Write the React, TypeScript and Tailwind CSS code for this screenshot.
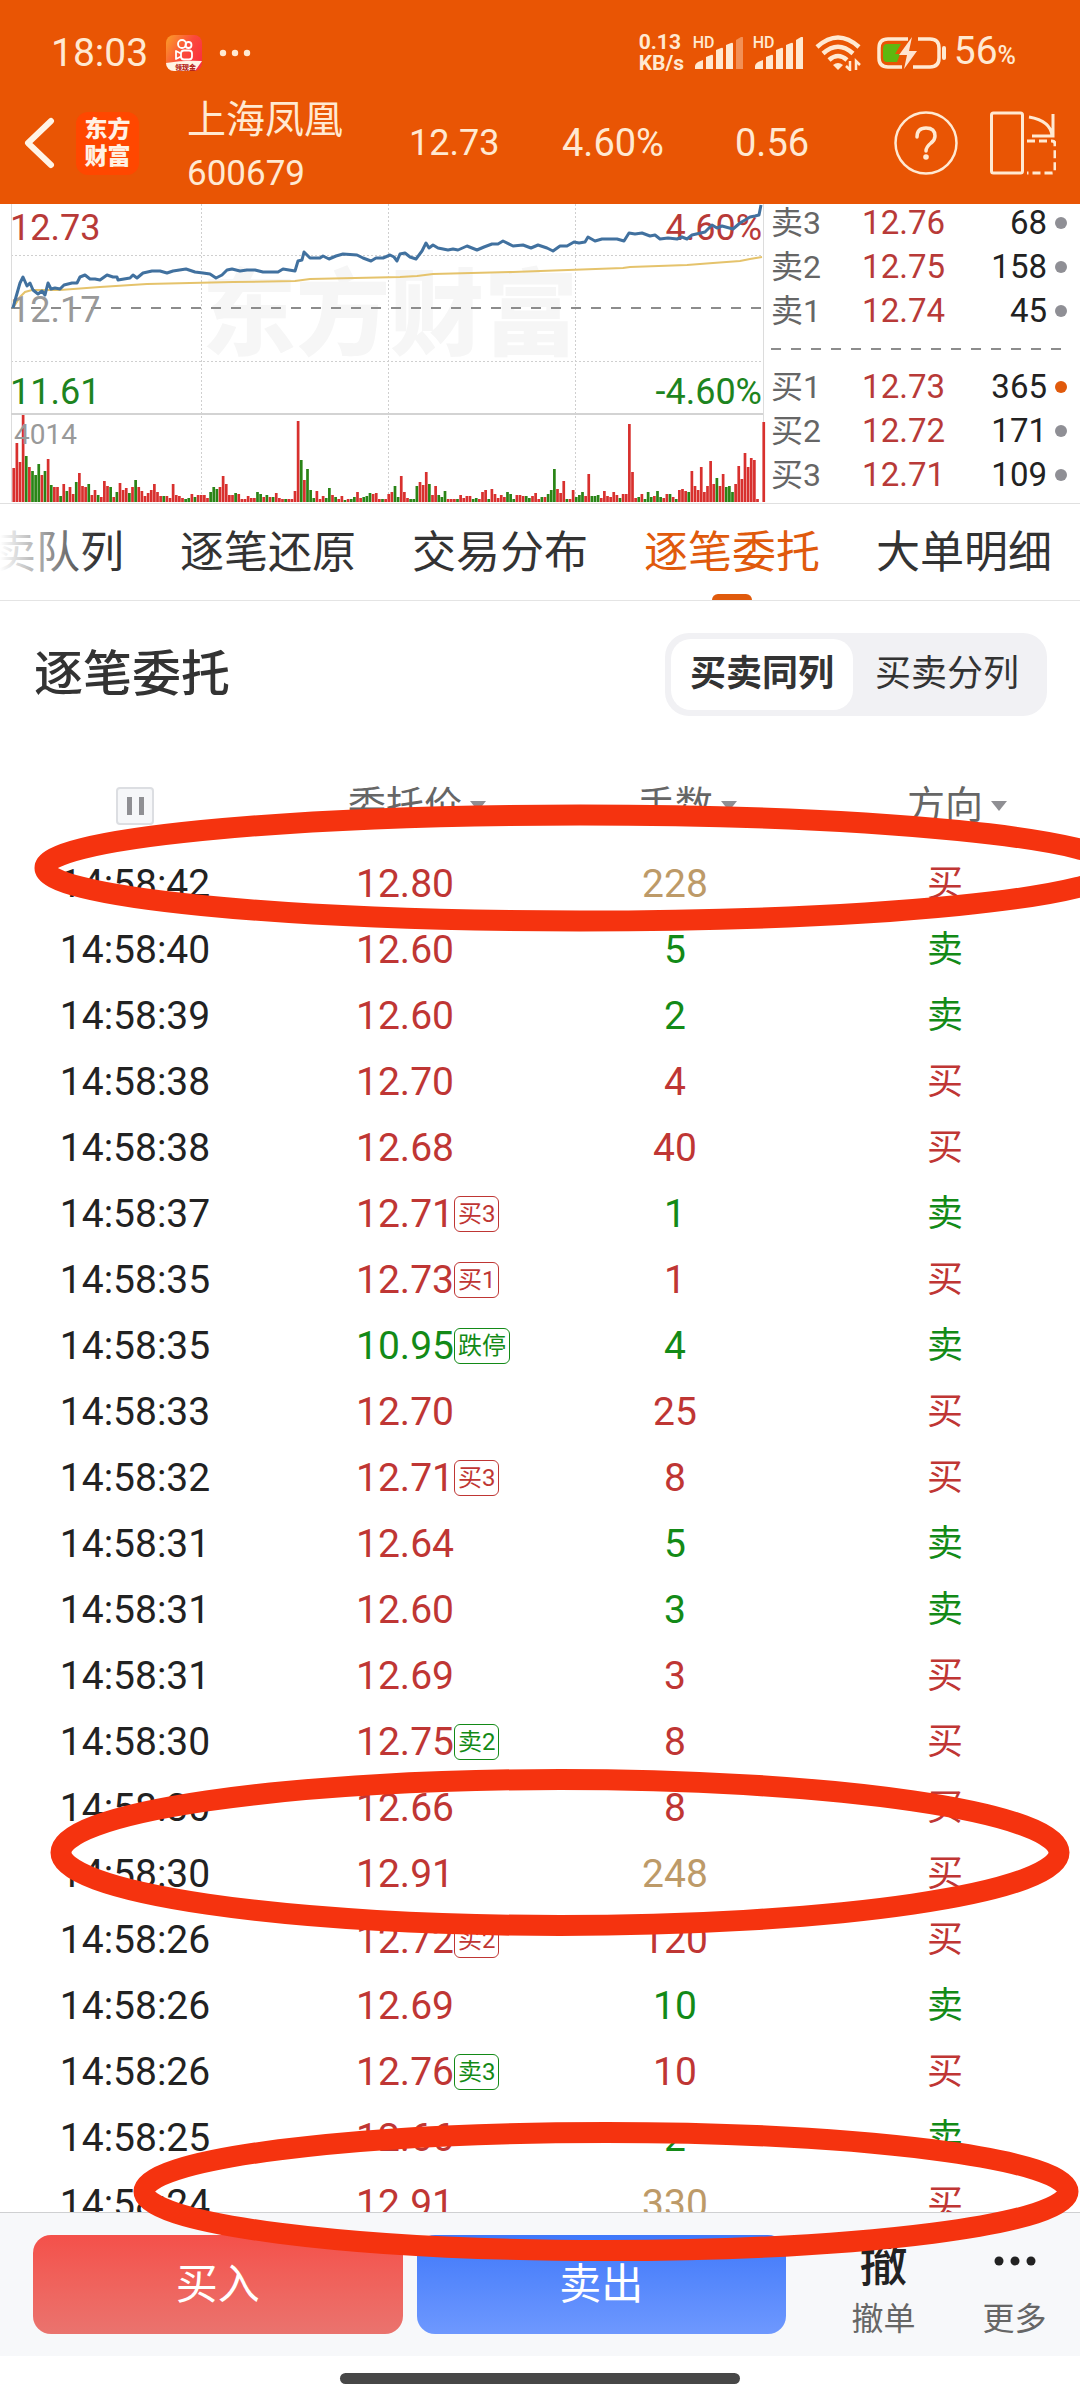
import React from 'react';

type Side = 'buy' | 'sell';

interface Order {
    time: string;
    price: string;
    volume: string;
    side: Side;
    tone?: Side;
    big?: boolean;
    tag?: string;
    tagTone?: Side;
}

const ORDERS: Order[] = [
    { time: '14:58:42', price: '12.80', volume: '228', side: 'buy', big: true },
    { time: '14:58:40', price: '12.60', volume: '5', side: 'sell' },
    { time: '14:58:39', price: '12.60', volume: '2', side: 'sell' },
    { time: '14:58:38', price: '12.70', volume: '4', side: 'buy' },
    { time: '14:58:38', price: '12.68', volume: '40', side: 'buy' },
    { time: '14:58:37', price: '12.71', volume: '1', side: 'sell', tag: '买3', tagTone: 'buy' },
    { time: '14:58:35', price: '12.73', volume: '1', side: 'buy', tag: '买1', tagTone: 'buy' },
    { time: '14:58:35', price: '10.95', volume: '4', side: 'sell', tone: 'sell', tag: '跌停', tagTone: 'sell' },
    { time: '14:58:33', price: '12.70', volume: '25', side: 'buy' },
    { time: '14:58:32', price: '12.71', volume: '8', side: 'buy', tag: '买3', tagTone: 'buy' },
    { time: '14:58:31', price: '12.64', volume: '5', side: 'sell' },
    { time: '14:58:31', price: '12.60', volume: '3', side: 'sell' },
    { time: '14:58:31', price: '12.69', volume: '3', side: 'buy' },
    { time: '14:58:30', price: '12.75', volume: '8', side: 'buy', tag: '卖2', tagTone: 'sell' },
    { time: '14:58:30', price: '12.66', volume: '8', side: 'buy' },
    { time: '14:58:30', price: '12.91', volume: '248', side: 'buy', big: true },
    { time: '14:58:26', price: '12.72', volume: '120', side: 'buy', tag: '买2', tagTone: 'buy' },
    { time: '14:58:26', price: '12.69', volume: '10', side: 'sell' },
    { time: '14:58:26', price: '12.76', volume: '10', side: 'buy', tag: '卖3', tagTone: 'sell' },
    { time: '14:58:25', price: '12.66', volume: '2', side: 'sell' },
    { time: '14:58:24', price: '12.91', volume: '330', side: 'buy', big: true },
];

const ASKS = [
    ['卖3', '12.76', '68'],
    ['卖2', '12.75', '158'],
    ['卖1', '12.74', '45'],
];

const BIDS = [
    ['买1', '12.73', '365'],
    ['买2', '12.72', '171'],
    ['买3', '12.71', '109'],
];

const TABS = ['买卖队列', '逐笔还原', '交易分布', '逐笔委托', '大单明细'];

const PRICE_LINE =
    '13,104 16,93 20,79 23,73 27,82 30,79 33,86 38,90 42,87 45,91 48,79 51,85 55,84 60,85 64,81 72,79 77,79 80,73 85,71 90,75 95,75 100,76 107,71 113,73 117,73 118,76 130,74 133,71 137,74 143,69 152,67 160,67 167,69 173,67 186,65 195,68 203,69 210,70 216,74 222,71 227,66 232,65 240,67 247,66 255,66 263,68 278,68 283,65 295,67 298,57 302,56 304,48 310,54 315,54 320,54 323,52 329,55 336,52 343,50 357,51 363,54 371,57 376,54 383,54 390,51 394,53 397,57 400,50 405,49 410,53 416,55 422,47 426,39 429,44 433,41 438,44 448,46 453,45 458,46 467,42 477,46 484,43 492,40 498,40 503,37 513,42 523,41 531,44 538,41 547,44 553,47 560,42 567,42 574,38 579,39 585,38 588,33 595,37 602,35 617,35 624,37 629,29 635,30 642,29 650,32 655,31 660,35 668,34 677,35 682,33 687,35 692,31 705,28 712,21 717,24 722,22 733,25 740,19 750,13 755,12 759,11 761,1';

const AVERAGE_LINE =
    '13,104 20,93 25,88 32,86 60,86 100,83 147,80 233,78 295,77 310,75 400,73 417,72 433,70 513,68 623,64 630,63 687,61 713,59 740,57 750,55 762,53';

// One entry per minute: r = up, g = down, followed by the bar height
const VOLUMES =
    'r34 r59 r40 r87 g46 r35 g31 g27 g38 r27 g31 r43 g17 r15 r15 g6 r18 g11 r15 r8 g20 r29 r16 r15 g18 r7 r12 g7 r5 r21 r16 g15 r5 g10 r19 r12 r14 g9 r15 g22 r15 r11 r6 r9 r12 r18 r10 r6 g6 r6 r4 r18 r7 r6 r4 g3 g4 r8 g5 r7 r7 r7 r4 g10 g15 g13 r15 r26 r18 r7 r7 g9 r8 r3 r3 r6 r4 r4 g10 g8 r5 g7 r5 g5 r9 r4 r3 g3 r3 r3 r11 r81 g42 r22 g33 g12 g4 r11 r3 r6 g4 g14 r7 g5 r3 r6 g2 r3 g3 g5 r10 r4 g5 g6 g9 r8 r9 r3 g3 r3 r8 r10 g16 g5 r26 r10 r4 g3 g3 g16 r20 r17 r30 g18 r7 r16 g7 g5 g11 r3 r3 r3 g3 r7 r4 r6 r6 g3 g4 r3 r10 r12 g3 r13 r8 r4 r7 r5 g10 g8 g3 r7 r7 r6 g6 g4 r6 r9 r3 g5 r5 g8 g12 g33 r13 r9 r21 g3 r3 r12 g5 g7 g10 r6 r28 g6 g6 g7 r4 r11 r6 r5 r10 r7 g4 r8 r8 r78 r30 r4 g5 r8 g3 g10 g5 r6 g11 g5 r4 r8 g8 r5 g3 r12 r13 r11 g10 r31 r16 r12 r35 r10 r16 r41 r18 g24 r16 r28 g15 g16 g10 r18 r36 r23 r49 r35 r44 r42 r3 r0 r80'.split(' ');

const textTone = (side: Side) => (side === 'buy' ? 'text-[#bf3634]' : 'text-[#138a17]');

const SignalBars: React.FC<{ weak?: boolean }> = ({ weak }) => (
    <span className="relative block">
        <span className="absolute -left-0.5 -top-1 text-[16px] leading-5 font-medium">HD</span>
        <svg className="h-8 w-12" viewBox="0 0 48 32" fill="currentColor">
            <path d="M0 32v-3q0-2 3-4l5-2v9z" />
            <path d="M11 20l5-2q2-1 2 1v13h-7z" />
            <path d="M21 13l5-2q2-1 2 1v20h-7z" />
            <path d="M31 8l5-2q2-1 2 1v25h-7z" />
            <path d="M41 3l5-3q2-1 2 1v31h-7z" opacity={weak ? 0.4 : 1} />
        </svg>
    </span>
);

const StatusBar: React.FC = () => (
    <div className="flex h-[82px] items-center pt-6 pr-16 pl-[51px]">
        <span className="text-[39px] leading-[48px]">18:03</span>
        <svg className="ml-[18px] size-9" viewBox="0 0 36 36">
            <defs>
                <linearGradient id="camera" x1="0" y1="0" x2="1" y2="0.6">
                    <stop offset="0" stopColor="#fba028" />
                    <stop offset="0.6" stopColor="#fb4a3c" />
                    <stop offset="1" stopColor="#fa3240" />
                </linearGradient>
                <clipPath id="camera-clip">
                    <rect width="36" height="36" rx="8" />
                </clipPath>
            </defs>
            <g clipPath="url(#camera-clip)">
                <rect width="36" height="36" fill="url(#camera)" />
                <path d="M0 28q18-3 36-2l-7 10H0z" fill="#fff3e4" />
                <g fill="none" stroke="#fff" strokeWidth="1.8">
                    <circle cx="16" cy="9" r="4" />
                    <circle cx="22.500" cy="10" r="3" />
                    <rect x="15" y="15.500" width="11" height="9" rx="3" />
                    <path d="M15 18.500l-5-2.500v8l5-2.500" strokeLinejoin="round" />
                </g>
                <text x="9" y="34.500" fontSize="7" fontWeight="900" fill="#b4261a">领现金</text>
            </g>
        </svg>
        <svg className="ml-[17px] h-2 w-8" viewBox="0 0 32 8" fill="currentColor">
            <circle cx="4" cy="4" r="3.200" />
            <circle cx="16" cy="4" r="3.200" />
            <circle cx="28" cy="4" r="3.200" />
        </svg>
        <div className="ml-auto flex w-[54px] flex-col text-[21px] leading-[21px] font-bold">
            <span>0.13</span>
            <span>KB/s</span>
        </div>
        <div className="ml-0.5 flex gap-3">
            <SignalBars weak />
            <SignalBars />
        </div>
        <svg className="ml-3 h-9 w-[46px]" viewBox="0 0 46 36" fill="none" stroke="currentColor" strokeWidth="4.500">
            <path d="M2 12Q23-7 44 12" />
            <path d="M8 18.500Q23 5 38 18.500" />
            <path d="M14 25Q23 17 32 25" />
            <path d="M18 30q5-4 10 0l-5 5z" fill="currentColor" stroke="none" />
            <path d="M35 26v9l-4-4M41 35v-9l4 4" strokeWidth="2.500" />
        </svg>
        <svg className="ml-4 h-8 w-[69px]" viewBox="0 0 69 32" fill="none">
            <path d="M31 2H11Q2 2 2 11v10q0 9 9 9h14M36 30h17q9 0 9-9V11q0-9-9-9H41" stroke="currentColor" strokeWidth="3.500" />
            <path d="M10 7h14l-6 10h5l-3 8H10Q6 25 6 20v-8q0-5 4-5z" fill="#5fb80f" />
            <path d="M35 0L22 18h8l-3 14 13-18h-8z" fill="#ffe3d0" />
            <path d="M67 11v10" stroke="currentColor" strokeWidth="4" strokeLinecap="round" />
        </svg>
        <span className="ml-2 text-[39px] leading-[48px]">
            56<span className="text-[25px] font-medium">%</span>
        </span>
    </div>
);

const Header: React.FC = () => (
    <header className="bg-[#e95504] text-[#ffe9d2]">
        <StatusBar />
        <div className="flex h-[122px] items-center pr-6 pl-6">
            <button aria-label="返回" className="h-[52px] w-8">
                <svg className="h-full w-full" viewBox="0 0 32 52" fill="none" stroke="#fff4e6" strokeWidth="6" strokeLinecap="round" strokeLinejoin="round">
                    <path d="M27 4L4 26l23 22" />
                </svg>
            </button>
            <div className="ml-5 flex size-[63px] items-center justify-center rounded-xl bg-[#ff4700] text-center text-[23px] leading-[27px] font-black text-[#fff1e4]">
                东方
                <br />
                财富
            </div>
            <div className="ml-12 w-[222px] pt-2 text-[35px] leading-[54px]">
                <h1 className="text-[39px]">上海凤凰</h1>
                <p>600679</p>
            </div>
            <span className="w-[153px] text-[36px]">12.73</span>
            <span className="w-[173px] text-[38px]">4.60%</span>
            <span className="flex-1 text-[38px]">0.56</span>
            <button aria-label="帮助" className="size-16">
                <svg className="h-full w-full" viewBox="0 0 64 64" fill="none" stroke="currentColor" strokeWidth="2.500">
                    <circle cx="32" cy="32" r="30.500" />
                    <path d="M23 26q0-9 9-9t9 8q0 4-4 7-5 4-5 8" strokeWidth="3.500" strokeLinecap="round" />
                    <circle cx="32" cy="46" r="2.800" fill="currentColor" stroke="none" />
                </svg>
            </button>
            <button aria-label="横屏" className="ml-8 h-16 w-[66px]">
                <svg className="h-full w-full" viewBox="0 0 66 64" fill="none" stroke="currentColor" strokeWidth="3">
                    <rect x="1.500" y="2" width="31" height="60" rx="2" />
                    <path d="M39 6q22 4 23 19M63 3v22H42" />
                    <path d="M37 30h25q3 0 3 3v26q0 3-3 3H37" strokeDasharray="8 4" />
                </svg>
            </button>
        </div>
    </header>
);

const Chart: React.FC = () => (
    <svg className="block w-full" viewBox="0 0 768 299" fill="none">
        <text x="390" y="144" textAnchor="middle" fontSize="94" fontWeight="900" fill="#f6f6f6">东方财富</text>
        <g stroke="#cfcfcf" strokeDasharray="2 2">
            <path d="M11 51.500H763M11 157.500H763" />
            <path d="M201.500 0V298M388.500 0V298M575.500 0V298" />
        </g>
        <path d="M11.500 0V298M763.500 0V298" stroke="#dcdcdc" />
        <path d="M11 210H763" stroke="#d3d3d3" strokeWidth="2" />
        <path d="M11 104H763" stroke="#8c8c8c" strokeWidth="2" strokeDasharray="10 10" />
        {VOLUMES.map((v, i) => {
            const height = Number(v.slice(1));
            return (
                <rect
                    key={i}
                    x={12.4 + i * 3.125}
                    y={298 - height}
                    width={2.7}
                    height={height}
                    fill={v[0] === 'r' ? '#d8302e' : '#2a8416'}
                />
            );
        })}
        <polyline points={AVERAGE_LINE} stroke="#e5c36c" strokeWidth="2" />
        <g fontSize="36">
            <text x="10" y="36" fill="#b83a38">12.73</text>
            <text x="10" y="118" fill="#999">12.17</text>
            <text x="10" y="200" fill="#1d8420">11.61</text>
            <text x="762" y="36" textAnchor="end" fill="#b83a38">4.60%</text>
            <text x="762" y="200" textAnchor="end" fill="#1d8420">-4.60%</text>
            <text x="14" y="240" fontSize="28" fill="#999">4014</text>
        </g>
        <polyline points={PRICE_LINE} stroke="#41719f" strokeWidth="3" strokeLinejoin="round" />
    </svg>
);

const BookRows: React.FC<{ rows: string[][]; active?: number }> = ({ rows, active }) => (
    <ul className="flex flex-col gap-2.5">
        {rows.map(([label, price, volume], i) => (
            <li key={label} className="flex items-center text-[33px] leading-[34px]">
                <span className="w-[70px] text-[32px] text-[#666]">{label}</span>
                <span className="w-[104px] text-right text-[#b83a38]">{price}</span>
                <span className="flex-1 text-right text-[#222]">{volume}</span>
                <span className={`ml-2 size-3 rounded-full ${i === active ? 'bg-[#e05a0c]' : 'bg-[#8f8f95]'}`} />
            </li>
        ))}
    </ul>
);

const Quote: React.FC = () => (
    <section className="grid grid-cols-[768fr_312fr] border-b border-[#e0e0e0]">
        <Chart />
        <div className="min-w-0 pt-0.5 pr-[13px] pl-[3px]">
            <BookRows rows={ASKS} />
            <svg className="mt-5 mb-5 block h-0.5 w-full" preserveAspectRatio="none" viewBox="0 0 296 2">
                <path d="M0 1H296" stroke="#8c8c8c" strokeWidth="2" strokeDasharray="10 10" />
            </svg>
            <BookRows rows={BIDS} active={0} />
        </div>
    </section>
);

const Tabs: React.FC = () => (
    <nav className="relative overflow-hidden border-b border-[#e4e4e4]">
        <div className="-ml-[52px] flex gap-14">
            {TABS.map((tab) => {
                const active = tab === '逐笔委托';
                return (
                    <button
                        key={tab}
                        className={`flex shrink-0 flex-col items-center text-[44px] ${active ? 'text-[#e05a0c]' : 'text-[#333]'}`}
                    >
                        <span className="pt-2 leading-[82px]">{tab}</span>
                        <span className={`h-1.5 w-10 rounded-t-md ${active ? 'bg-[#e05a0c]' : ''}`} />
                    </button>
                );
            })}
        </div>
        <div className="absolute inset-y-0 left-0 w-24 bg-linear-to-r from-white to-transparent" />
    </nav>
);

const SortHeader: React.FC<{ label: string }> = ({ label }) => (
    <th className="font-normal">
        <button className="relative">
            {label}
            <svg className="absolute top-1/2 left-full ml-2 h-2.5 w-4 -translate-y-1/2" viewBox="0 0 16 10">
                <path d="M0 0h16L8 10z" fill="#8f8f93" />
            </svg>
        </button>
    </th>
);

const OrderTable: React.FC = () => (
    <table className="w-full table-fixed text-center text-[39px] text-[#222]">
        <thead>
            <tr className="h-[91px] text-[38px] text-[#666]">
                <th>
                    <button aria-label="暂停" className="mx-auto flex size-[38px] items-center justify-center gap-[7px] rounded border-2 border-[#dcdee2] bg-[#f6f7f9]">
                        <span className="h-[18px] w-[5px] bg-[#8f8f93]" />
                        <span className="h-[18px] w-[5px] bg-[#8f8f93]" />
                    </button>
                </th>
                <SortHeader label="委托价" />
                <SortHeader label="手数" />
                <SortHeader label="方向" />
            </tr>
        </thead>
        <tbody>
            {ORDERS.map((order, i) => (
                <tr key={i} className="h-[66px]">
                    <td>{order.time}</td>
                    <td className={textTone(order.tone ?? 'buy')}>
                        <span className="relative">
                            {order.price}
                            {order.tag && (
                                <span
                                    className={`absolute top-1/2 left-full -translate-y-1/2 rounded-md border border-current px-[3px] text-[24px] leading-[34px] whitespace-nowrap ${textTone(order.tagTone ?? 'buy')}`}
                                >
                                    {order.tag}
                                </span>
                            )}
                        </span>
                    </td>
                    <td className={order.big ? 'text-[#bd9a68]' : textTone(order.side)}>{order.volume}</td>
                    <td className={`text-[36px] ${textTone(order.side)}`}>{order.side === 'buy' ? '买' : '卖'}</td>
                </tr>
            ))}
        </tbody>
    </table>
);

const TradeBar: React.FC = () => (
    <footer>
        <div className="flex h-36 items-center border-t border-[#cfd0d2] bg-[#f7f8fa] pl-[33px]">
            <div className="flex flex-1 gap-3.5 text-[42px] text-white">
                <button className="h-[99px] flex-1 rounded-[18px] bg-linear-to-b from-[#f4504a] to-[#ea736e]">买入</button>
                <button className="h-[99px] flex-1 rounded-[18px] bg-linear-to-b from-[#3f78fa] to-[#6e98fe]">卖出</button>
            </div>
            <button className="ml-8 flex w-[131px] flex-col items-center pt-2.5 text-[32px] leading-[50px] text-[#666]">
                <span className="text-[48px] leading-[58px] font-medium text-[#222]">撤</span>
                撤单
            </button>
            <button className="flex w-[131px] flex-col items-center pt-2.5 text-[32px] leading-[50px] text-[#666]">
                <svg className="h-[58px] w-11" viewBox="0 0 44 58" fill="#222">
                    <circle cx="6" cy="25" r="4.500" />
                    <circle cx="22" cy="25" r="4.500" />
                    <circle cx="38" cy="25" r="4.500" />
                </svg>
                更多
            </button>
        </div>
        <div className="flex h-11 items-start justify-center bg-white pt-[17px]">
            <div className="h-[11px] w-[400px] rounded-full bg-[#474747]" />
        </div>
    </footer>
);

// Hand-drawn rings around the large orders
const Rings: React.FC = () => (
    <svg className="pointer-events-none absolute top-0 left-0 w-full" viewBox="0 0 1080 2400" fill="none" stroke="#f5330f" strokeWidth="21">
        <ellipse cx="580" cy="868" rx="535" ry="53" />
        <ellipse cx="560" cy="1852.500" rx="499" ry="73" />
        <ellipse cx="606" cy="2191.500" rx="462" ry="59" />
    </svg>
);

const App: React.FC = () => {
    return (
        <div className="relative flex h-screen flex-col overflow-hidden bg-white font-['Roboto','Noto_Sans_CJK_SC',sans-serif]">
            <Header />
            <Quote />
            <Tabs />
            <main className="flex min-h-0 flex-1 flex-col overflow-hidden">
                <div className="flex items-center justify-between pt-8 pr-[33px] pb-11 pl-[34px]">
                    <h2 className="text-[49px] leading-[60px] font-medium text-[#333]">逐笔委托</h2>
                    <div className="flex rounded-3xl bg-[#f1f1f4] p-1.5 text-[36px] leading-[71px] text-[#333]">
                        <button className="rounded-[20px] bg-white px-[19px] font-bold">买卖同列</button>
                        <button className="px-[22px]">买卖分列</button>
                    </div>
                </div>
                <OrderTable />
            </main>
            <TradeBar />
            <Rings />
        </div>
    );
};

export default App;
